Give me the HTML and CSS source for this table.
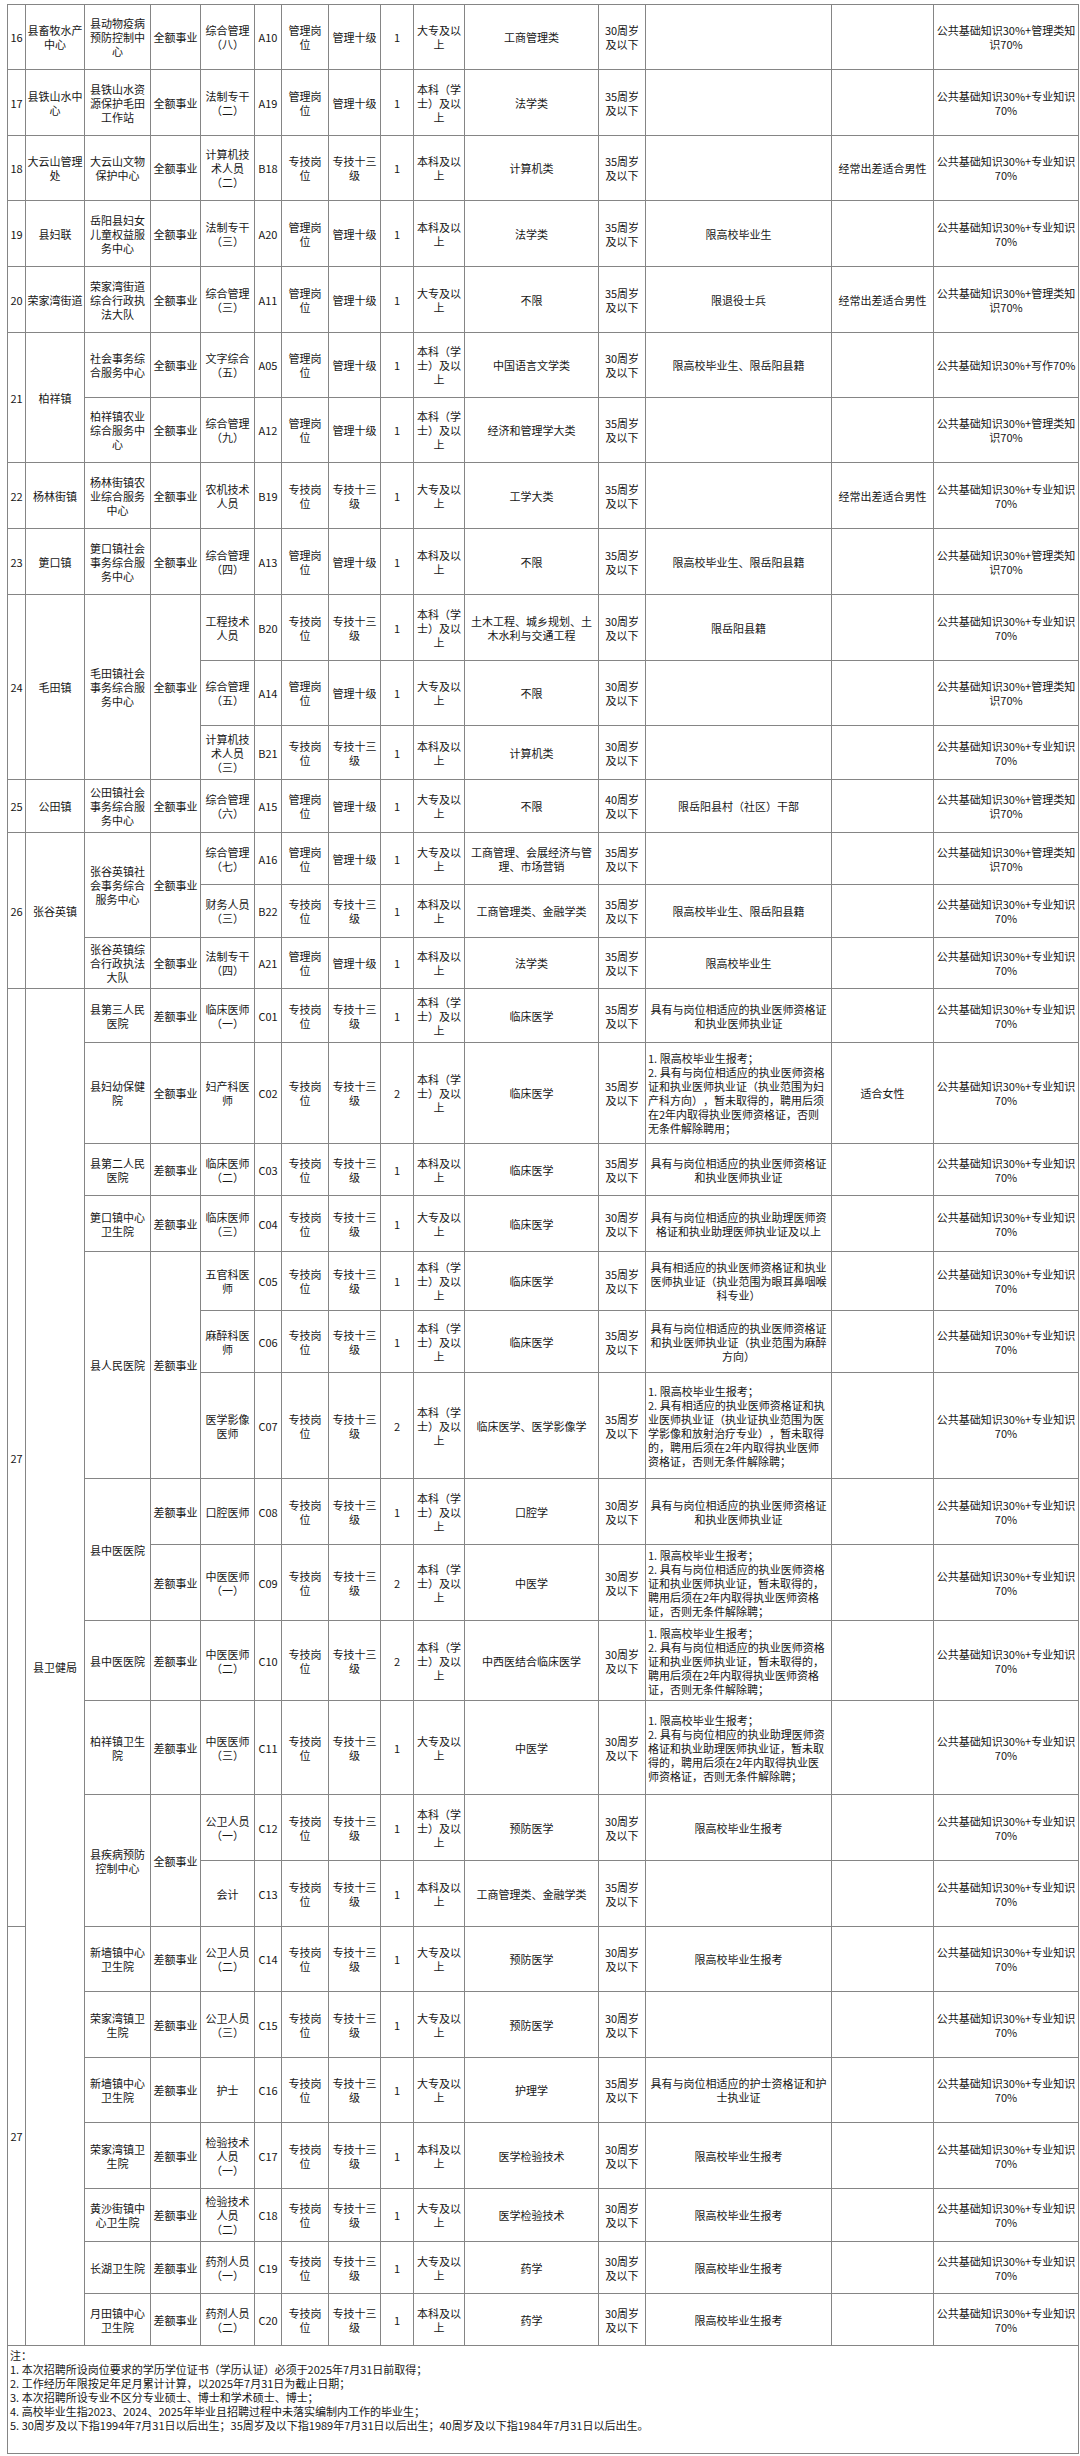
FILE: index.html
```html
<!DOCTYPE html>
<html lang="zh-CN">
<head>
<meta charset="utf-8">
<title>岗位表</title>
<link rel="stylesheet" href="styles.css">
</head>
<body>
<div class="page">
<table class="sheet">
<colgroup>
<col class="c1"><col class="c2"><col class="c3"><col class="c4"><col class="c5"><col class="c6"><col class="c7"><col class="c8"><col class="c9"><col class="c10"><col class="c11"><col class="c12"><col class="c13"><col class="c14"><col class="c15">
</colgroup>
<tbody>
<tr class="h65"><td>16</td><td>县畜牧水产中心</td><td>县动物疫病预防控制中心</td><td>全额事业</td><td>综合管理（八）</td><td>A10</td><td>管理岗位</td><td>管理十级</td><td>1</td><td>大专及以上</td><td>工商管理类</td><td>30周岁及以下</td><td></td><td></td><td>公共基础知识30%+管理类知识70%</td></tr>
<tr class="h66"><td>17</td><td>县铁山水中心</td><td>县铁山水资源保护毛田工作站</td><td>全额事业</td><td>法制专干（二）</td><td>A19</td><td>管理岗位</td><td>管理十级</td><td>1</td><td>本科（学士）及以上</td><td>法学类</td><td>35周岁及以下</td><td></td><td></td><td>公共基础知识30%+专业知识70%</td></tr>
<tr class="h65"><td>18</td><td>大云山管理处</td><td>大云山文物保护中心</td><td>全额事业</td><td>计算机技术人员（二）</td><td>B18</td><td>专技岗位</td><td>专技十三级</td><td>1</td><td>本科及以上</td><td>计算机类</td><td>35周岁及以下</td><td></td><td>经常出差适合男性</td><td>公共基础知识30%+专业知识70%</td></tr>
<tr class="h66"><td>19</td><td>县妇联</td><td>岳阳县妇女儿童权益服务中心</td><td>全额事业</td><td>法制专干（三）</td><td>A20</td><td>管理岗位</td><td>管理十级</td><td>1</td><td>本科及以上</td><td>法学类</td><td>35周岁及以下</td><td>限高校毕业生</td><td></td><td>公共基础知识30%+专业知识70%</td></tr>
<tr class="h66"><td>20</td><td>荣家湾街道</td><td>荣家湾街道综合行政执法大队</td><td>全额事业</td><td>综合管理（三）</td><td>A11</td><td>管理岗位</td><td>管理十级</td><td>1</td><td>大专及以上</td><td>不限</td><td>35周岁及以下</td><td>限退役士兵</td><td>经常出差适合男性</td><td>公共基础知识30%+管理类知识70%</td></tr>
<tr class="h65"><td rowspan="2">21</td><td rowspan="2">柏祥镇</td><td>社会事务综合服务中心</td><td>全额事业</td><td>文字综合（五）</td><td>A05</td><td>管理岗位</td><td>管理十级</td><td>1</td><td>本科（学士）及以上</td><td>中国语言文学类</td><td>30周岁及以下</td><td>限高校毕业生、限岳阳县籍</td><td></td><td>公共基础知识30%+写作70%</td></tr>
<tr class="h65"><td>柏祥镇农业综合服务中心</td><td>全额事业</td><td>综合管理（九）</td><td>A12</td><td>管理岗位</td><td>管理十级</td><td>1</td><td>本科（学士）及以上</td><td>经济和管理学大类</td><td>35周岁及以下</td><td></td><td></td><td>公共基础知识30%+管理类知识70%</td></tr>
<tr class="h66"><td>22</td><td>杨林街镇</td><td>杨林街镇农业综合服务中心</td><td>全额事业</td><td>农机技术人员</td><td>B19</td><td>专技岗位</td><td>专技十三级</td><td>1</td><td>大专及以上</td><td>工学大类</td><td>35周岁及以下</td><td></td><td>经常出差适合男性</td><td>公共基础知识30%+专业知识70%</td></tr>
<tr class="h66"><td>23</td><td>筻口镇</td><td>筻口镇社会事务综合服务中心</td><td>全额事业</td><td>综合管理（四）</td><td>A13</td><td>管理岗位</td><td>管理十级</td><td>1</td><td>本科及以上</td><td>不限</td><td>35周岁及以下</td><td>限高校毕业生、限岳阳县籍</td><td></td><td>公共基础知识30%+管理类知识70%</td></tr>
<tr class="h66"><td rowspan="3">24</td><td rowspan="3">毛田镇</td><td rowspan="3">毛田镇社会事务综合服务中心</td><td rowspan="3">全额事业</td><td>工程技术人员</td><td>B20</td><td>专技岗位</td><td>专技十三级</td><td>1</td><td>本科（学士）及以上</td><td>土木工程、城乡规划、土木水利与交通工程</td><td>30周岁及以下</td><td>限岳阳县籍</td><td></td><td>公共基础知识30%+专业知识70%</td></tr>
<tr class="h65"><td>综合管理（五）</td><td>A14</td><td>管理岗位</td><td>管理十级</td><td>1</td><td>大专及以上</td><td>不限</td><td>30周岁及以下</td><td></td><td></td><td>公共基础知识30%+管理类知识70%</td></tr>
<tr class="h54"><td>计算机技术人员（三）</td><td>B21</td><td>专技岗位</td><td>专技十三级</td><td>1</td><td>本科及以上</td><td>计算机类</td><td>30周岁及以下</td><td></td><td></td><td>公共基础知识30%+专业知识70%</td></tr>
<tr class="h53"><td>25</td><td>公田镇</td><td>公田镇社会事务综合服务中心</td><td>全额事业</td><td>综合管理（六）</td><td>A15</td><td>管理岗位</td><td>管理十级</td><td>1</td><td>大专及以上</td><td>不限</td><td>40周岁及以下</td><td>限岳阳县村（社区）干部</td><td></td><td>公共基础知识30%+管理类知识70%</td></tr>
<tr class="h52"><td rowspan="3">26</td><td rowspan="3">张谷英镇</td><td rowspan="2">张谷英镇社会事务综合服务中心</td><td rowspan="2">全额事业</td><td>综合管理（七）</td><td>A16</td><td>管理岗位</td><td>管理十级</td><td>1</td><td>大专及以上</td><td>工商管理、会展经济与管理、市场营销</td><td>35周岁及以下</td><td></td><td></td><td>公共基础知识30%+管理类知识70%</td></tr>
<tr class="h53"><td>财务人员（三）</td><td>B22</td><td>专技岗位</td><td>专技十三级</td><td>1</td><td>本科及以上</td><td>工商管理类、金融学类</td><td>35周岁及以下</td><td>限高校毕业生、限岳阳县籍</td><td></td><td>公共基础知识30%+专业知识70%</td></tr>
<tr class="h51"><td>张谷英镇综合行政执法大队</td><td>全额事业</td><td>法制专干（四）</td><td>A21</td><td>管理岗位</td><td>管理十级</td><td>1</td><td>本科及以上</td><td>法学类</td><td>35周岁及以下</td><td>限高校毕业生</td><td></td><td>公共基础知识30%+专业知识70%</td></tr>

<tr class="h54"><td rowspan="13">27</td><td rowspan="20">县卫健局</td><td>县第三人民医院</td><td>差额事业</td><td>临床医师（一）</td><td>C01</td><td>专技岗位</td><td>专技十三级</td><td>1</td><td>本科（学士）及以上</td><td>临床医学</td><td>35周岁及以下</td><td>具有与岗位相适应的执业医师资格证和执业医师执业证</td><td></td><td>公共基础知识30%+专业知识70%</td></tr>
<tr class="h101"><td>县妇幼保健院</td><td>全额事业</td><td>妇产科医师</td><td>C02</td><td>专技岗位</td><td>专技十三级</td><td>2</td><td>本科（学士）及以上</td><td>临床医学</td><td>35周岁及以下</td><td class="l">1. 限高校毕业生报考；<br>2. 具有与岗位相适应的执业医师资格证和执业医师执业证（执业范围为妇产科方向），暂未取得的，聘用后须在2年内取得执业医师资格证，否则无条件解除聘用；</td><td>适合女性</td><td>公共基础知识30%+专业知识70%</td></tr>
<tr class="h52"><td>县第二人民医院</td><td>差额事业</td><td>临床医师（二）</td><td>C03</td><td>专技岗位</td><td>专技十三级</td><td>1</td><td>本科及以上</td><td>临床医学</td><td>35周岁及以下</td><td>具有与岗位相适应的执业医师资格证和执业医师执业证</td><td></td><td>公共基础知识30%+专业知识70%</td></tr>
<tr class="h56"><td>筻口镇中心卫生院</td><td>差额事业</td><td>临床医师（三）</td><td>C04</td><td>专技岗位</td><td>专技十三级</td><td>1</td><td>大专及以上</td><td>临床医学</td><td>30周岁及以下</td><td>具有与岗位相适应的执业助理医师资格证和执业助理医师执业证及以上</td><td></td><td>公共基础知识30%+专业知识70%</td></tr>
<tr class="h59"><td rowspan="3">县人民医院</td><td rowspan="3">差额事业</td><td>五官科医师</td><td>C05</td><td>专技岗位</td><td>专技十三级</td><td>1</td><td>本科（学士）及以上</td><td>临床医学</td><td>35周岁及以下</td><td>具有相适应的执业医师资格证和执业医师执业证（执业范围为眼耳鼻咽喉科专业）</td><td></td><td>公共基础知识30%+专业知识70%</td></tr>
<tr class="h62"><td>麻醉科医师</td><td>C06</td><td>专技岗位</td><td>专技十三级</td><td>1</td><td>本科（学士）及以上</td><td>临床医学</td><td>35周岁及以下</td><td>具有与岗位相适应的执业医师资格证和执业医师执业证（执业范围为麻醉方向）</td><td></td><td>公共基础知识30%+专业知识70%</td></tr>
<tr class="h106"><td>医学影像医师</td><td>C07</td><td>专技岗位</td><td>专技十三级</td><td>2</td><td>本科（学士）及以上</td><td>临床医学、医学影像学</td><td>35周岁及以下</td><td class="l">1. 限高校毕业生报考；<br>2. 具有相适应的执业医师资格证和执业医师执业证（执业证执业范围为医学影像和放射治疗专业），暂未取得的，聘用后须在2年内取得执业医师资格证，否则无条件解除聘；</td><td></td><td>公共基础知识30%+专业知识70%</td></tr>
<tr class="h66"><td rowspan="2">县中医医院</td><td>差额事业</td><td>口腔医师</td><td>C08</td><td>专技岗位</td><td>专技十三级</td><td>1</td><td>本科（学士）及以上</td><td>口腔学</td><td>30周岁及以下</td><td>具有与岗位相适应的执业医师资格证和执业医师执业证</td><td></td><td>公共基础知识30%+专业知识70%</td></tr>
<tr class="h76"><td>差额事业</td><td>中医医师（一）</td><td>C09</td><td>专技岗位</td><td>专技十三级</td><td>2</td><td>本科（学士）及以上</td><td>中医学</td><td>30周岁及以下</td><td class="l">1. 限高校毕业生报考；<br>2. 具有与岗位相适应的执业医师资格证和执业医师执业证，暂未取得的，聘用后须在2年内取得执业医师资格证，否则无条件解除聘；</td><td></td><td>公共基础知识30%+专业知识70%</td></tr>
<tr class="h80"><td>县中医医院</td><td>差额事业</td><td>中医医师（二）</td><td>C10</td><td>专技岗位</td><td>专技十三级</td><td>2</td><td>本科（学士）及以上</td><td>中西医结合临床医学</td><td>30周岁及以下</td><td class="l">1. 限高校毕业生报考；<br>2. 具有与岗位相适应的执业医师资格证和执业医师执业证，暂未取得的，聘用后须在2年内取得执业医师资格证，否则无条件解除聘；</td><td></td><td>公共基础知识30%+专业知识70%</td></tr>
<tr class="h94"><td>柏祥镇卫生院</td><td>差额事业</td><td>中医医师（三）</td><td>C11</td><td>专技岗位</td><td>专技十三级</td><td>1</td><td>大专及以上</td><td>中医学</td><td>30周岁及以下</td><td class="l">1. 限高校毕业生报考；<br>2. 具有与岗位相应的执业助理医师资格证和执业助理医师执业证，暂未取得的，聘用后须在2年内取得执业医师资格证，否则无条件解除聘；</td><td></td><td>公共基础知识30%+专业知识70%</td></tr>
<tr class="h66"><td rowspan="2">县疾病预防控制中心</td><td rowspan="2">全额事业</td><td>公卫人员（一）</td><td>C12</td><td>专技岗位</td><td>专技十三级</td><td>1</td><td>本科（学士）及以上</td><td>预防医学</td><td>30周岁及以下</td><td>限高校毕业生报考</td><td></td><td>公共基础知识30%+专业知识70%</td></tr>
<tr class="h66"><td>会计</td><td>C13</td><td>专技岗位</td><td>专技十三级</td><td>1</td><td>本科及以上</td><td>工商管理类、金融学类</td><td>35周岁及以下</td><td></td><td></td><td>公共基础知识30%+专业知识70%</td></tr>
<tr class="h65"><td rowspan="7">27</td><td>新墙镇中心卫生院</td><td>差额事业</td><td>公卫人员（二）</td><td>C14</td><td>专技岗位</td><td>专技十三级</td><td>1</td><td>大专及以上</td><td>预防医学</td><td>30周岁及以下</td><td>限高校毕业生报考</td><td></td><td>公共基础知识30%+专业知识70%</td></tr>
<tr class="h66"><td>荣家湾镇卫生院</td><td>差额事业</td><td>公卫人员（三）</td><td>C15</td><td>专技岗位</td><td>专技十三级</td><td>1</td><td>大专及以上</td><td>预防医学</td><td>30周岁及以下</td><td></td><td></td><td>公共基础知识30%+专业知识70%</td></tr>
<tr class="h65"><td>新墙镇中心卫生院</td><td>差额事业</td><td>护士</td><td>C16</td><td>专技岗位</td><td>专技十三级</td><td>1</td><td>大专及以上</td><td>护理学</td><td>35周岁及以下</td><td>具有与岗位相适应的护士资格证和护士执业证</td><td></td><td>公共基础知识30%+专业知识70%</td></tr>
<tr class="h66"><td>荣家湾镇卫生院</td><td>差额事业</td><td>检验技术人员（一）</td><td>C17</td><td>专技岗位</td><td>专技十三级</td><td>1</td><td>本科及以上</td><td>医学检验技术</td><td>30周岁及以下</td><td>限高校毕业生报考</td><td></td><td>公共基础知识30%+专业知识70%</td></tr>
<tr class="h53"><td>黄沙街镇中心卫生院</td><td>差额事业</td><td>检验技术人员（二）</td><td>C18</td><td>专技岗位</td><td>专技十三级</td><td>1</td><td>大专及以上</td><td>医学检验技术</td><td>30周岁及以下</td><td>限高校毕业生报考</td><td></td><td>公共基础知识30%+专业知识70%</td></tr>
<tr class="h52"><td>长湖卫生院</td><td>差额事业</td><td>药剂人员（一）</td><td>C19</td><td>专技岗位</td><td>专技十三级</td><td>1</td><td>大专及以上</td><td>药学</td><td>30周岁及以下</td><td>限高校毕业生报考</td><td></td><td>公共基础知识30%+专业知识70%</td></tr>
<tr class="h52"><td>月田镇中心卫生院</td><td>差额事业</td><td>药剂人员（二）</td><td>C20</td><td>专技岗位</td><td>专技十三级</td><td>1</td><td>本科及以上</td><td>药学</td><td>30周岁及以下</td><td>限高校毕业生报考</td><td></td><td>公共基础知识30%+专业知识70%</td></tr>
<tr class="h108"><td colspan="15" class="notes">注：<br>1. 本次招聘所设岗位要求的学历学位证书（学历认证）必须于2025年7月31日前取得；<br>2. 工作经历年限按足年足月累计计算，以2025年7月31日为截止日期；<br>3. 本次招聘所设专业不区分专业硕士、博士和学术硕士、博士；<br>4. 高校毕业生指2023、2024、2025年毕业且招聘过程中未落实编制内工作的毕业生；<br>5. 30周岁及以下指1994年7月31日以后出生；35周岁及以下指1989年7月31日以后出生；40周岁及以下指1984年7月31日以后出生。</td></tr>
</tbody>
</table>
</div>
</body>
</html>
```
FILE: styles.css
```css
* { box-sizing: border-box; }
html, body { margin: 0; padding: 0; background: #ffffff; }
body {
  font-family: "Noto Sans CJK SC", "Noto Sans", "Liberation Sans", sans-serif;
  color: #161616;
}
.page { padding: 4px 2px 0 7px; }
.sheet {
  border-collapse: collapse;
  table-layout: fixed;
  width: 1071px;
  font-size: 11px;
  line-height: 14px;
  text-spacing-trim: space-all;
}
.sheet td {
  border: 1px solid #858585;
  color: #161616;
  text-align: center;
  vertical-align: middle;
  padding: 0 1.5px;
}
.sheet td.l { text-align: left; padding: 0 2px; }
.sheet td.notes { text-align: left; vertical-align: top; padding: 2px 2px; }
.c1 { width: 18px; }
.c2 { width: 59px; }
.c3 { width: 66px; }
.c4 { width: 50px; }
.c5 { width: 54px; }
.c6 { width: 27px; }
.c7 { width: 47px; }
.c8 { width: 52px; }
.c9 { width: 33px; }
.c10 { width: 51px; }
.c11 { width: 134px; }
.c12 { width: 47px; }
.c13 { width: 186px; }
.c14 { width: 102px; }
.c15 { width: 145px; }
.h51 { height: 51px; }
.h52 { height: 52px; }
.h53 { height: 53px; }
.h54 { height: 54px; }
.h56 { height: 56px; }
.h59 { height: 59px; }
.h62 { height: 62px; }
.h65 { height: 65px; }
.h66 { height: 66px; }
.h76 { height: 76px; }
.h80 { height: 80px; }
.h94 { height: 94px; }
.h101 { height: 101px; }
.h106 { height: 106px; }
.h108 { height: 108px; }
```
